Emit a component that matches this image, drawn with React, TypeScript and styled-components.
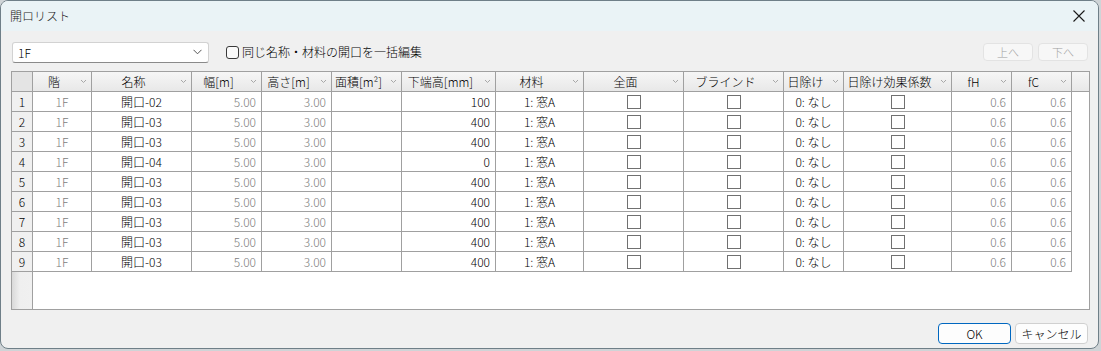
import React from "react";
import styled, { createGlobalStyle } from "styled-components";

const Global = createGlobalStyle`
  html, body { margin: 0; padding: 0; background: #cfd4d7; }
  body { font-family: "Noto Sans CJK JP", "Noto Sans", sans-serif; font-size: 12px; font-weight: 300; color: #000; }
  * { box-sizing: border-box; }
`;

const Window = styled.div`
  width: 1099px;
  height: 349px;
  border: 1px solid #6f7f88;
  border-radius: 8px;
  overflow: hidden;
  background: #f0f0f0;
  display: flex;
  flex-direction: column;
`;

const TitleBar = styled.div`
  height: 30px;
  background: #eaf3f6;
  display: flex;
  align-items: center;
  justify-content: space-between;
  padding: 0 8px 0 9px;
  flex: none;
`;

const Title = styled.span`
  font-size: 12px;
  line-height: 14px;
  color: #1a1a1a;
`;

const CloseBtn = styled.div`
  width: 14px;
  height: 14px;
  margin-right: 4px;
  display: flex;
  align-items: center;
  justify-content: center;
`;

const Body = styled.div`
  flex: 1;
  display: flex;
  flex-direction: column;
  padding: 11px 9px 0 10px;
`;

const Toolbar = styled.div`
  height: 20px;
  display: flex;
  align-items: center;
  margin-bottom: 9px;
  padding-right: 1px;
`;

const Combo = styled.div`
  width: 197px;
  height: 21px;
  margin-left: 1px;
  background: #fff;
  border: 1px solid #d2d2d2;
  border-bottom-color: #8a8a8a;
  border-radius: 3px;
  display: flex;
  align-items: center;
  justify-content: space-between;
  padding: 0 6px 0 5px;
  font-size: 12px;
`;

const CheckLabel = styled.label`
  display: flex;
  align-items: center;
  margin-left: 17px;
  font-size: 12px;
  line-height: 14px;
  gap: 3px;
`;

const RoundCheck = styled.span`
  width: 13px;
  height: 13px;
  border: 1px solid #3a3a3a;
  border-radius: 3px;
  background: #fafafa;
  display: inline-block;
`;

const Spacer = styled.div`
  flex: 1;
`;

const SmallBtn = styled.div`
  width: 50px;
  height: 18px;
  margin-left: 5px;
  border: 1px solid #e3e3e3;
  border-radius: 4px;
  background: #f7f7f7;
  color: #a0a0a0;
  font-size: 11px;
  display: flex;
  align-items: center;
  justify-content: center;
`;

const cols = "21px 59px 100px 70px 70px 70px 94px 88px 100px 100px 60px 108px 60px 60px 1fr";

const Table = styled.div`
  width: 1079px;
  height: 239px;
  border: 1px solid #a0a0a0;
  background: #fff;
  display: flex;
  flex-direction: column;
`;

const HeaderRow = styled.div`
  display: grid;
  grid-template-columns: ${cols};
  height: 20px;
  flex: none;
`;

const HeadCell = styled.div<{ $corner?: boolean }>`
  border-right: 1px solid #a0a0a0;
  border-bottom: 1px solid #a0a0a0;
  background: ${(p) => (p.$corner ? "#e4e4e4" : "linear-gradient(#f6f6f6, #e8e8e8)")};
  display: flex;
  align-items: center;
  font-size: 12px;
  line-height: 14px;
  color: #000;
  overflow: hidden;
  white-space: nowrap;
`;

const HeadFill = styled.div`
  border-bottom: 1px solid #a0a0a0;
  background: linear-gradient(#f6f6f6, #e8e8e8);
`;

const HeadLabel = styled.span`
  flex: 1;
  text-align: center;
`;

const Chevron = styled.span`
  width: 16px;
  flex: none;
  display: flex;
  justify-content: center;
`;

const Row = styled.div`
  display: grid;
  grid-template-columns: ${cols};
  height: 20px;
  flex: none;
`;

type Align = "center" | "right";

const Cell = styled.div<{ $align: Align; $grey?: boolean }>`
  border-right: 1px solid #a0a0a0;
  border-bottom: 1px solid #a0a0a0;
  display: flex;
  align-items: center;
  justify-content: ${(p) => (p.$align === "right" ? "flex-end" : "center")};
  padding-right: ${(p) => (p.$align === "right" ? "5px" : "0")};
  color: ${(p) => (p.$grey ? "#7d7d7d" : "#000")};
  font-size: 12px;
  line-height: 14px;
  white-space: nowrap;
`;

const RowHead = styled.div`
  border-right: 1px solid #a0a0a0;
  border-bottom: 1px solid #a0a0a0;
  background: #f0f0f0;
  display: flex;
  align-items: center;
  justify-content: center;
  font-size: 12px;
  line-height: 14px;
`;

const Box = styled.span`
  width: 14px;
  height: 14px;
  border: 1px solid #707070;
  background: #fff;
  display: inline-block;
`;

const Filler = styled.div`
  flex: 1;
  display: flex;
`;

const FillerHead = styled.div`
  width: 21px;
  border-right: 1px solid #a0a0a0;
  background: linear-gradient(90deg, #d9d9d9, #efefef 40%, #f0f0f0);
`;

const Footer = styled.div`
  display: flex;
  justify-content: flex-end;
  gap: 4px;
  margin-top: 13px;
  padding-right: 1px;
`;

const DlgBtn = styled.div<{ $primary?: boolean }>`
  width: 73px;
  height: 21px;
  border: 1px solid ${(p) => (p.$primary ? "#0067c0" : "#d0d0d0")};
  border-radius: 4px;
  background: #fdfdfd;
  display: flex;
  align-items: center;
  justify-content: center;
  font-size: 12px;
  color: #000;
`;

const Chev = () => (
  <svg width="7" height="5" viewBox="0 0 7 5">
    <path d="M1 1 L3.5 3.5 L6 1" fill="none" stroke="#a8a8a8" strokeWidth="1" />
  </svg>
);

const headers = ["階", "名称", "幅[m]", "高さ[m]", "面積[m²]", "下端高[mm]", "材料", "全面", "ブラインド", "日除け", "日除け効果係数", "fH", "fC"];

const names = ["開口-02", "開口-03", "開口-03", "開口-04", "開口-03", "開口-03", "開口-03", "開口-03", "開口-03"];
const heights = ["100", "400", "400", "0", "400", "400", "400", "400", "400"];

export default function App() {
  return (
    <>
      <Global />
      <Window>
        <TitleBar>
          <Title>開ロリスト</Title>
          <CloseBtn>
            <svg width="12" height="12" viewBox="0 0 12 12">
              <path d="M0.5 0.5 L11.5 11.5 M11.5 0.5 L0.5 11.5" stroke="#1a1a1a" strokeWidth="1.1" />
            </svg>
          </CloseBtn>
        </TitleBar>
        <Body>
          <Toolbar>
            <Combo>
              <span>1F</span>
              <svg width="9" height="6" viewBox="0 0 9 6">
                <path d="M0.5 0.8 L4.5 4.8 L8.5 0.8" fill="none" stroke="#555" strokeWidth="1" />
              </svg>
            </Combo>
            <CheckLabel>
              <RoundCheck />
              同じ名称・材料の開口を一括編集
            </CheckLabel>
            <Spacer />
            <SmallBtn>上へ</SmallBtn>
            <SmallBtn>下へ</SmallBtn>
          </Toolbar>
          <Table>
            <HeaderRow>
              <HeadCell $corner />
              {headers.map((h) => (
                <HeadCell key={h}>
                  <HeadLabel>{h}</HeadLabel>
                  <Chevron>
                    <Chev />
                  </Chevron>
                </HeadCell>
              ))}
              <HeadFill />
            </HeaderRow>
            {names.map((n, i) => (
              <Row key={i}>
                <RowHead>{i + 1}</RowHead>
                <Cell $align="center" $grey>1F</Cell>
                <Cell $align="center">{n}</Cell>
                <Cell $align="right" $grey>5.00</Cell>
                <Cell $align="right" $grey>3.00</Cell>
                <Cell $align="right" />
                <Cell $align="right">{heights[i]}</Cell>
                <Cell $align="center">1: 窓A</Cell>
                <Cell $align="center"><Box /></Cell>
                <Cell $align="center"><Box /></Cell>
                <Cell $align="center">0: なし</Cell>
                <Cell $align="center"><Box /></Cell>
                <Cell $align="right" $grey>0.6</Cell>
                <Cell $align="right" $grey>0.6</Cell>
                <div />
              </Row>
            ))}
            <Filler>
              <FillerHead />
            </Filler>
          </Table>
          <Footer>
            <DlgBtn $primary>OK</DlgBtn>
            <DlgBtn>キャンセル</DlgBtn>
          </Footer>
        </Body>
      </Window>
    </>
  );
}
